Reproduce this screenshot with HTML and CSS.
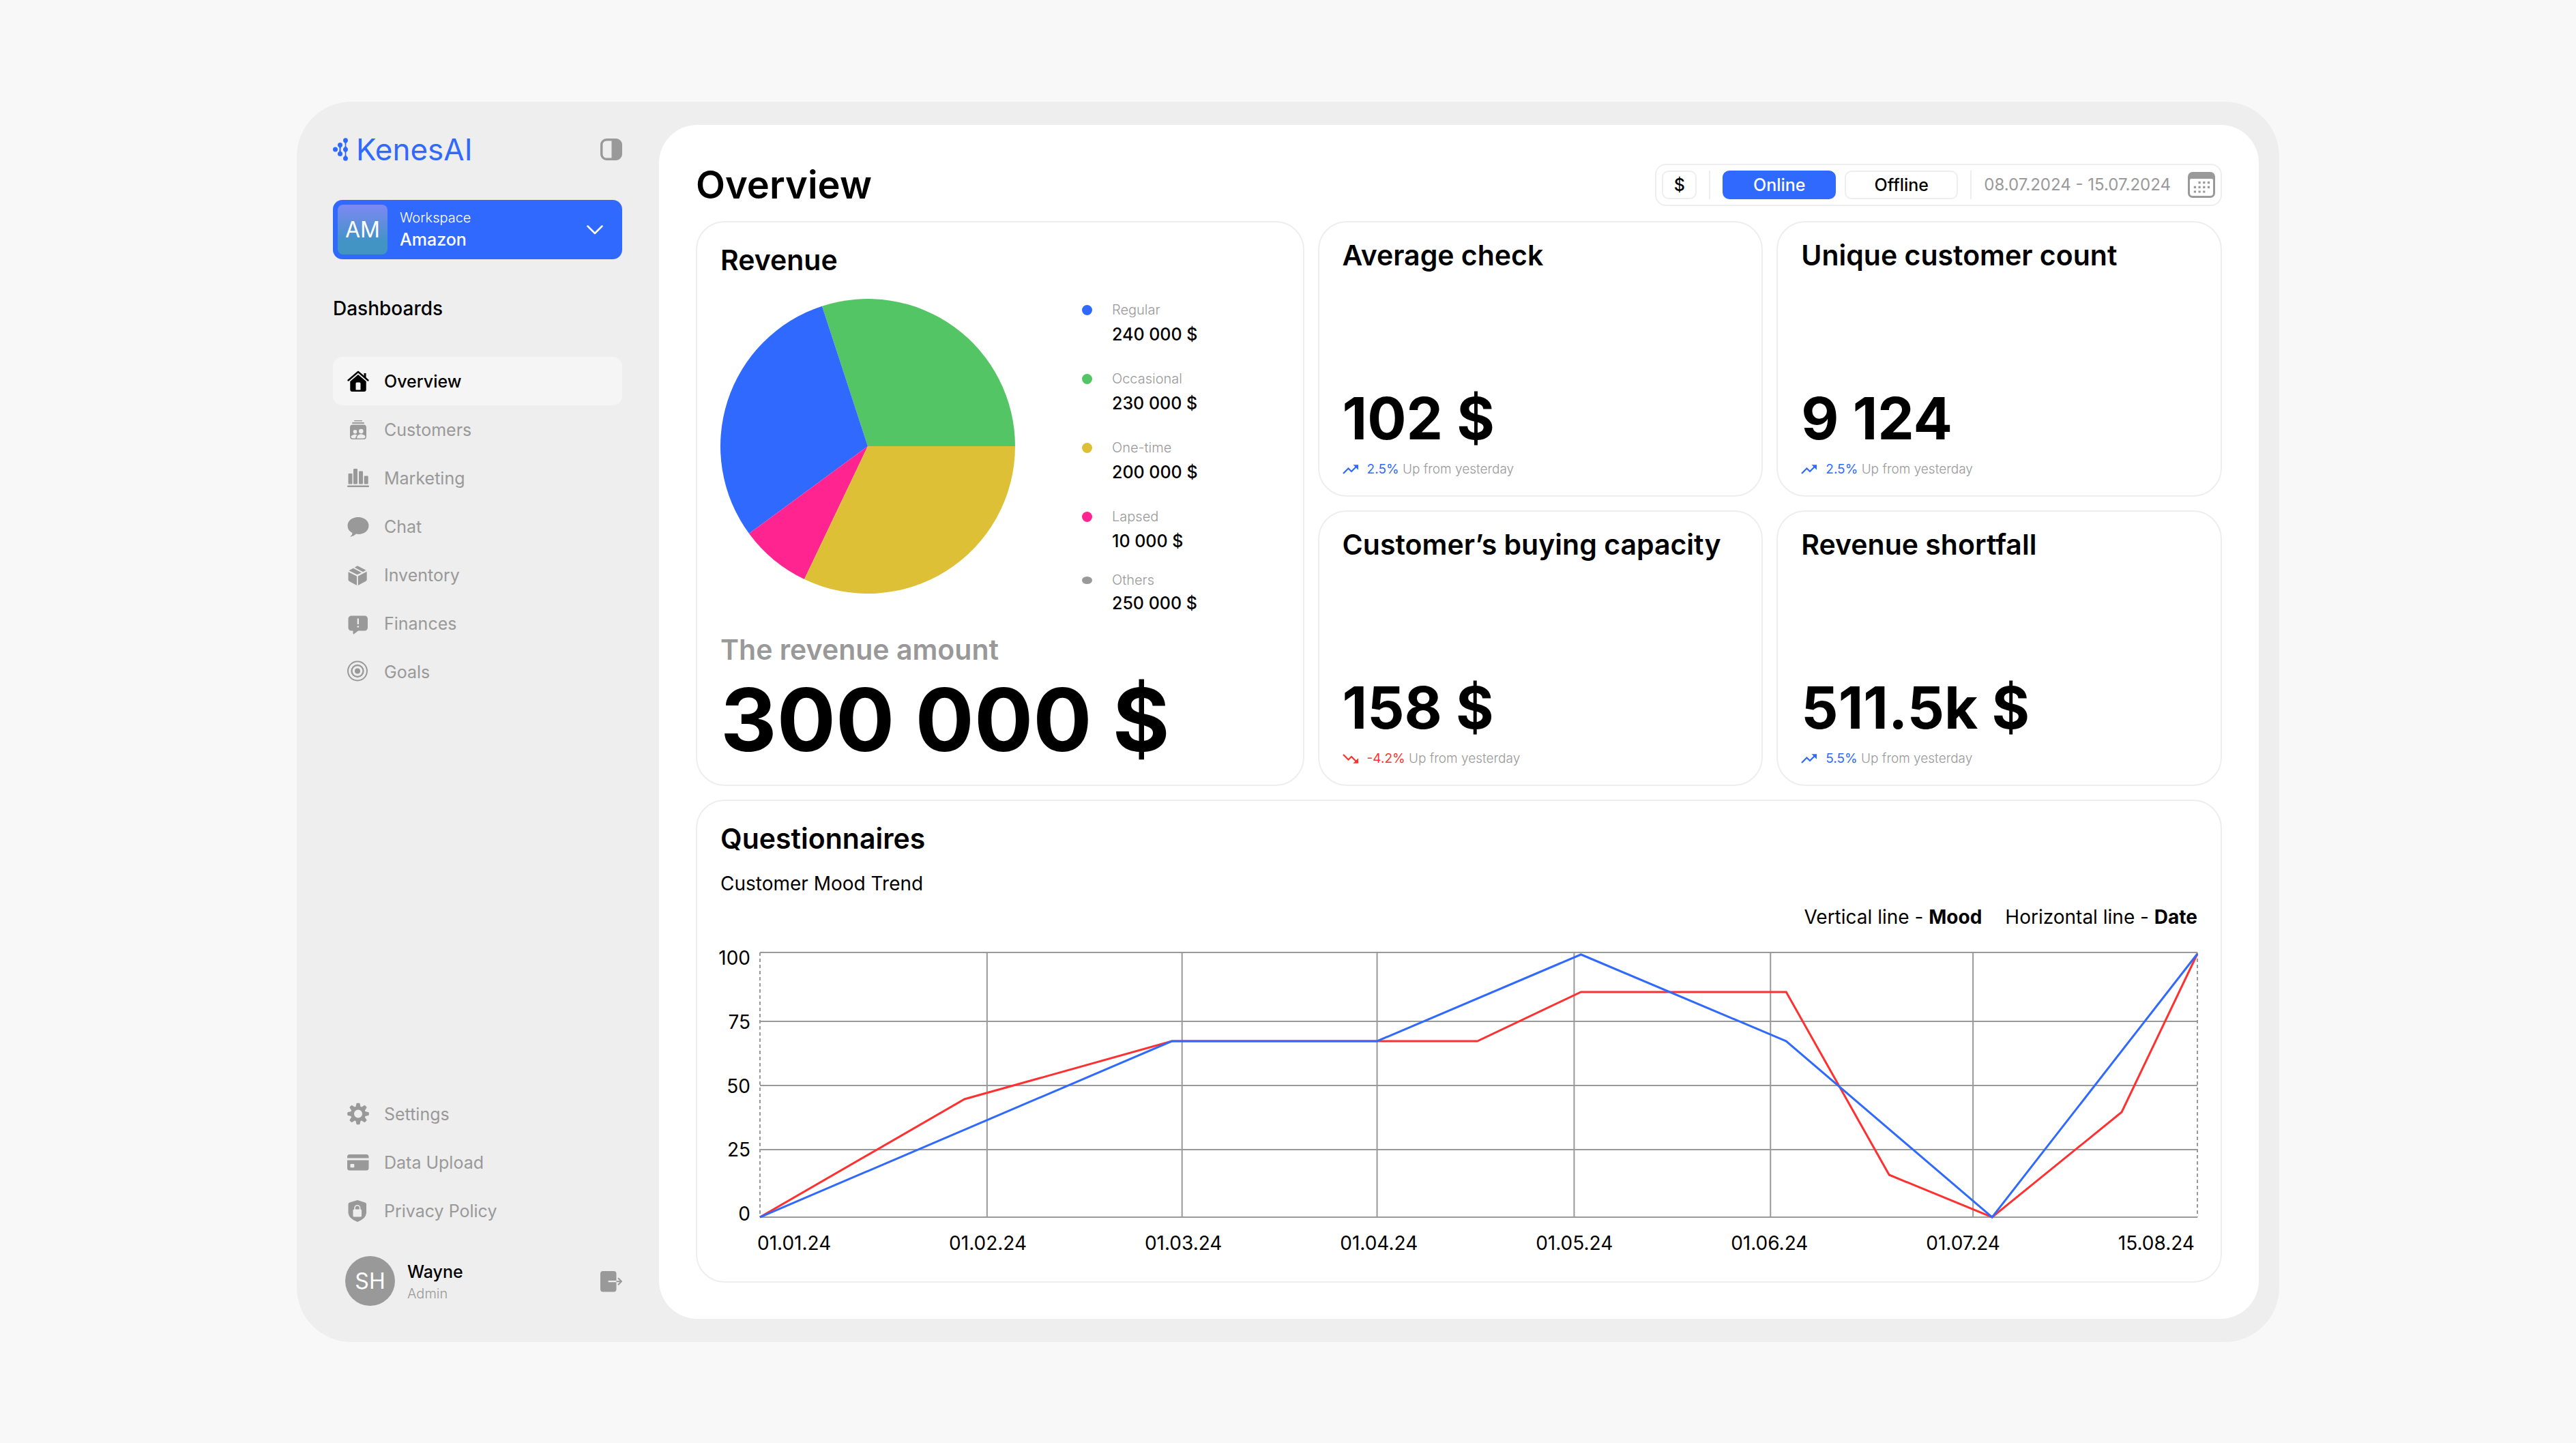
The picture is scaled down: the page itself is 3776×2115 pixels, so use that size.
FILE: index.html
```html
<!DOCTYPE html>
<html lang="en">
<head>
<meta charset="UTF-8">
<meta name="viewport" content="width=device-width, initial-scale=1.0">
<title>KenesAI - Overview</title>
<link rel="stylesheet" href="styles.css">
</head>
<body>

<!-- trend arrows reused by the stat cards -->
<svg class="sprite" aria-hidden="true">
    <symbol id="trend-up" viewBox="0 0 24 14">
        <path d="M1 13 L8.5 5.5 L13 10 L20 3" fill="none" stroke="currentColor" stroke-width="2.2"/>
        <path d="M15.5 .3H23V7.8Z" fill="currentColor"/>
    </symbol>
    <symbol id="trend-down" viewBox="0 0 24 14">
        <path d="M1 1 L8.5 8.5 L13 4 L20 11" fill="none" stroke="currentColor" stroke-width="2.2"/>
        <path d="M15.5 13.7H23V6.2Z" fill="currentColor"/>
    </symbol>
</svg>

<div class="app">
    <aside class="sidebar">
        <div class="brand-row">
            <a class="brand" href="#">
                <svg class="brand-mark" viewBox="0 0 22 34" aria-hidden="true">
                    <g fill="currentColor">
                        <circle cx="3.5" cy="17" r="3.5"/>
                        <circle cx="10.5" cy="10.5" r="3.5"/>
                        <circle cx="10.5" cy="23.5" r="3.5"/>
                        <circle cx="18.5" cy="3.8" r="3.5"/>
                        <circle cx="18.5" cy="17" r="3.5"/>
                        <circle cx="18.5" cy="30.2" r="3.5"/>
                        <path d="M8.5 12 Q10.5 17 8.5 22 H12.5 Q10.5 17 12.5 12Z M16.5 5.5 Q19 10.5 16.5 15.5 H20.5 Q18 10.5 20.5 5.5Z M16.5 18.5 Q19 23.5 16.5 28.5 H20.5 Q18 23.5 20.5 18.5Z"/>
                    </g>
                </svg>
                KenesAI
            </a>
            <button class="icon-btn" type="button" aria-label="Collapse sidebar">
                <svg width="32" height="32" viewBox="0 0 32 32">
                    <path d="M9 0H23A9 9 0 0 1 32 9V23A9 9 0 0 1 23 32H9A9 9 0 0 1 0 23V9A9 9 0 0 1 9 0ZM9 3.5A5.5 5.5 0 0 0 3.5 9V23A5.5 5.5 0 0 0 9 28.5H16.5V3.5Z" fill="currentColor" fill-rule="evenodd"/>
                </svg>
            </button>
        </div>

        <button class="workspace" type="button" aria-haspopup="listbox">
            <span class="workspace-tile">AM</span>
            <span class="workspace-text">
                <span class="workspace-label">Workspace</span>
                <span class="workspace-name">Amazon</span>
            </span>
            <svg width="24" height="14" viewBox="0 0 24 14" aria-hidden="true">
                <path d="M1.5 1.5 L12 12 L22.5 1.5" fill="none" stroke="currentColor" stroke-width="2.5" stroke-linecap="round" stroke-linejoin="round"/>
            </svg>
        </button>

        <h2 class="nav-title">Dashboards</h2>

        <nav class="nav">
            <a class="nav-item active" href="#">
                <svg viewBox="0 0 32 32">
                    <path d="M1.5 14.5 L16 2 L30.5 14.5" fill="none" stroke="currentColor" stroke-width="2.4" stroke-linecap="round" stroke-linejoin="round"/>
                    <path d="M24.5 4H27.5V11L24.5 8.5Z" fill="currentColor"/>
                    <path d="M16 6 L27.7 16V28A3 3 0 0 1 24.7 31H7.3A3 3 0 0 1 4.3 28V16ZM14 17.5A1.5 1.5 0 0 0 12.5 19V28.5H19.5V19A1.5 1.5 0 0 0 18 17.5Z" fill="currentColor" fill-rule="evenodd"/>
                </svg>
                Overview
            </a>
            <a class="nav-item" href="#">
                <svg viewBox="0 0 32 32">
                    <g fill="currentColor">
                        <rect x="10" y="2" width="12" height="1.5" rx=".7"/>
                        <rect x="7" y="5" width="18" height="2" rx="1"/>
                        <path d="M8 8.5H24A4 4 0 0 1 28 12.500V26A4 4 0 0 1 24 30H8A4 4 0 0 1 4 26V12.5A4 4 0 0 1 8 8.5ZM11.5 16A2.8 2.8 0 1 0 11.5 21.6A2.8 2.8 0 1 0 11.5 16ZM20.3 14.8A3.3 3.3 0 1 0 20.3 21.4A3.3 3.3 0 1 0 20.3 14.8ZM5.5 25.5V26A2.7 2.7 0 0 0 8 28.5H12Q12.5 25.5 14.5 23.5Q9 21.5 5.5 25.5ZM14 28.5H24A2.7 2.7 0 0 0 26.5 26V25Q23.5 22.3 20.3 22.3Q14.5 22.5 14 28.5Z" fill-rule="evenodd"/>
                    </g>
                </svg>
                Customers
            </a>
            <a class="nav-item" href="#">
                <svg viewBox="0 0 32 32">
                    <g fill="currentColor">
                        <rect x="1.5" y="9" width="6" height="15.5" rx="1"/>
                        <rect x="9" y="2" width="6" height="22.5" rx="1"/>
                        <rect x="17" y="5.5" width="6" height="19" rx="1"/>
                        <rect x="24.7" y="12.5" width="6" height="12" rx="1"/>
                        <rect x="0" y="26.5" width="32" height="2.5" rx="1"/>
                    </g>
                </svg>
                Marketing
            </a>
            <a class="nav-item" href="#">
                <svg viewBox="0 0 32 32">
                    <path d="M16 2C25 2 31.5 7.5 31.5 14.5S25 27 16.5 27Q14.5 27 13 26.6Q9.5 30.3 5 30.8Q4.3 30.5 5 29.8Q7.5 27.8 7.5 25.2Q.5 21.5 .5 14.5C.5 7.5 7 2 16 2Z" fill="currentColor"/>
                </svg>
                Chat
            </a>
            <a class="nav-item" href="#">
                <svg viewBox="0 0 32 32">
                    <g fill="currentColor">
                        <path d="M14 2.8Q15 2.2 16 2.8L27.5 8.8L23 11.2L10.8 4.8Z"/>
                        <path d="M8.8 5.8L20.8 12.3L17.5 14L14.5 15.2L2.5 9.3Z"/>
                        <path d="M1.5 11.2L14 17.5V31L3 25Q1.5 24 1.5 22.5Z"/>
                        <path d="M28.7 10.8L15.8 17.5V31L27 25Q28.7 24 28.7 22.5Z"/>
                    </g>
                </svg>
                Inventory
            </a>
            <a class="nav-item" href="#">
                <svg viewBox="0 0 32 32">
                    <path d="M6 4.5H25.5A4.5 4.5 0 0 1 30 9V22A4.5 4.5 0 0 1 25.5 26.5H16L10 31.3Q8.5 32 8.5 30.5V26.5H6A4.5 4.5 0 0 1 1.5 22V9A4.5 4.5 0 0 1 6 4.5ZM14.7 9.5V17H17V9.5A1.15 1.15 0 0 0 14.7 9.5ZM14.5 20.5A1.35 1.35 0 1 0 17.2 20.5A1.35 1.35 0 1 0 14.5 20.5Z" fill="currentColor" fill-rule="evenodd"/>
                </svg>
                Finances
            </a>
            <a class="nav-item" href="#">
                <svg viewBox="0 0 32 32">
                    <circle cx="15" cy="14.5" r="14" fill="none" stroke="currentColor" stroke-width="2"/>
                    <circle cx="15" cy="14.5" r="8.5" fill="none" stroke="currentColor" stroke-width="2.4"/>
                    <circle cx="15" cy="14.5" r="4" fill="currentColor"/>
                </svg>
                Goals
            </a>
        </nav>

        <nav class="nav nav-bottom">
            <a class="nav-item" href="#">
                <svg viewBox="0 0 32 32">
                    <g fill="currentColor">
                        <path d="M16 4.5A11 11 0 1 0 16 26.5A11 11 0 1 0 16 4.5ZM16 9.5A6 6 0 1 1 16 21.5A6 6 0 1 1 16 9.5Z" fill-rule="evenodd"/>
                        <g id="teeth">
                            <path id="tooth" d="M12.2 6.5L13.4 .7Q13.7 -.3 14.7 -.3H17.3Q18.3 -.3 18.6 .7L19.8 6.5Z"/>
                            <use href="#tooth" transform="rotate(90 16 15.5)"/>
                            <use href="#tooth" transform="rotate(180 16 15.5)"/>
                            <use href="#tooth" transform="rotate(270 16 15.5)"/>
                        </g>
                        <use href="#teeth" transform="rotate(45 16 15.5)"/>
                    </g>
                </svg>
                Settings
            </a>
            <a class="nav-item" href="#">
                <svg viewBox="0 0 32 32">
                    <path d="M3.5 4H28A3.5 3.5 0 0 1 31.5 7.5V9.5H0V7.5A3.5 3.5 0 0 1 3.5 4ZM0 12.5H31.5V24A3.5 3.5 0 0 1 28 27.5H3.5A3.5 3.5 0 0 1 0 24ZM5.5 18A1 1 0 0 0 4.5 19V22.2A1 1 0 0 0 5.5 23.2H9.3A1 1 0 0 0 10.3 22.2V19A1 1 0 0 0 9.3 18Z" fill="currentColor" fill-rule="evenodd"/>
                </svg>
                Data Upload
            </a>
            <a class="nav-item" href="#">
                <svg viewBox="0 0 32 32">
                    <path d="M15 0L26 3.5Q28 4.3 28 6V18Q28 27 15 32Q1.5 27 1.5 18V6Q1.5 4.3 3.5 3.5Z" fill="currentColor"/>
                    <rect x="8.5" y="13.5" width="12.5" height="11" rx="1.5" fill="#eee"/>
                    <path d="M11 14V11.5A3.8 3.8 0 0 1 18.6 11.5V14" fill="none" stroke="#eee" stroke-width="1.6"/>
                </svg>
                Privacy Policy
            </a>
        </nav>

        <div class="user">
            <span class="avatar">SH</span>
            <div class="user-text">
                <span class="user-name">Wayne</span>
                <span class="user-role">Admin</span>
            </div>
            <button class="icon-btn" type="button" aria-label="Log out">
                <svg width="32" height="32" viewBox="0 0 32 32">
                    <rect x="0" y="1" width="23.5" height="30.5" rx="4" fill="currentColor"/>
                    <path d="M12.5 16.2H23.5" stroke="#eee" stroke-width="2.2" stroke-linecap="round"/>
                    <path d="M23.5 16.2H30.5M26 11.2L31 16.2L26 21.2" fill="none" stroke="currentColor" stroke-width="2"/>
                </svg>
            </button>
        </div>
    </aside>

    <main class="main">
        <header class="topbar">
            <h1>Overview</h1>
            <div class="filters">
                <button class="chip chip-currency" type="button">$</button>
                <span class="divider"></span>
                <div class="switch">
                    <button class="chip chip-wide selected" type="button">Online</button>
                    <button class="chip chip-wide" type="button">Offline</button>
                </div>
                <span class="divider"></span>
                <button class="date-range" type="button">
                    08.07.2024 - 15.07.2024
                    <svg width="40" height="38" viewBox="0 0 40 38" aria-hidden="true">
                        <path d="M7 0H33A7 7 0 0 1 40 7V31A7 7 0 0 1 33 38H7A7 7 0 0 1 0 31V7A7 7 0 0 1 7 0ZM5 10A2 2 0 0 0 3 12V31A4 4 0 0 0 7 35H33A4 4 0 0 0 37 31V12A2 2 0 0 0 35 10Z" fill="currentColor" fill-rule="evenodd"/>
                        <path d="M15.500 15.700H32.500M8.800 22.300H32.500M8.800 29H26" fill="none" stroke="currentColor" stroke-width="3.2" stroke-dasharray="3.2 3.500"/>
                    </svg>
                </button>
            </div>
        </header>

        <div class="cards">
            <section class="card revenue">
                <h2>Revenue</h2>
                <div class="revenue-body">
                    <svg class="pie" viewBox="-216 -216 432 432" role="img" aria-label="Revenue by customer type">
                        <path d="M0 0L216 0A216 216 0 0 0 -67 -205.3Z" fill="#54c564"/>
                        <path d="M0 0L-67 -205.3A216 216 0 0 0 -174 128Z" fill="#3069fe"/>
                        <path d="M0 0L-174 128A216 216 0 0 0 -93 195Z" fill="#ff2490"/>
                        <path d="M0 0L-93 195A216 216 0 0 0 216 0Z" fill="#dec037"/>
                    </svg>
                    <ul class="legend">
                        <li><i class="dot blue"></i><span>Regular</span><b>240 000 $</b></li>
                        <li><i class="dot green"></i><span>Occasional</span><b>230 000 $</b></li>
                        <li><i class="dot yellow"></i><span>One-time</span><b>200 000 $</b></li>
                        <li><i class="dot pink"></i><span>Lapsed</span><b>10 000 $</b></li>
                        <li class="others"><i class="dot gray"></i><span>Others</span><b>250 000 $</b></li>
                    </ul>
                </div>
                <h3>The revenue amount</h3>
                <p class="total">300 000 $</p>
            </section>

            <section class="card stat">
                <h2>Average check</h2>
                <p class="value">102 $</p>
                <p class="trend"><svg class="up"><use href="#trend-up"/></svg><span><em class="up">2.5%</em> Up from yesterday</span></p>
            </section>
            <section class="card stat">
                <h2>Unique customer count</h2>
                <p class="value">9 124</p>
                <p class="trend"><svg class="up"><use href="#trend-up"/></svg><span><em class="up">2.5%</em> Up from yesterday</span></p>
            </section>
            <section class="card stat">
                <h2>Customer’s buying capacity</h2>
                <p class="value">158 $</p>
                <p class="trend"><svg class="down"><use href="#trend-down"/></svg><span><em class="down">-4.2%</em> Up from yesterday</span></p>
            </section>
            <section class="card stat">
                <h2>Revenue shortfall</h2>
                <p class="value">511.5k $</p>
                <p class="trend"><svg class="up"><use href="#trend-up"/></svg><span><em class="up">5.5%</em> Up from yesterday</span></p>
            </section>

            <section class="card questionnaires">
                <h2>Questionnaires</h2>
                <p class="subtitle">Customer Mood Trend</p>
                <p class="axes-note"><span>Vertical line - <b>Mood</b></span><span>Horizontal line - <b>Date</b></span></p>
                <div class="chart">
                    <div class="y-axis"><span>100</span><span>75</span><span>50</span><span>25</span><span>0</span></div>
                    <div class="plot">
                        <svg viewBox="0 0 2108 388" preserveAspectRatio="none" role="img" aria-label="Customer mood by date">
                            <path class="grid-line" d="M0 0H2108M0 101H2108M0 195H2108M0 289H2108M0 388H2108M333 0V388M619 0V388M905 0V388M1194 0V388M1482 0V388M1779 0V388"/>
                            <path class="grid-line dashed" d="M0 0V388M2108 0V388"/>
                            <polyline class="line red" points="0,388 300,215 604,130 1052,130 1204,58 1505,58 1656,326 1807,388 1997,234 2108,2"/>
                            <polyline class="line blue" points="0,388 604,130 905,130 1204,3 1505,130 1807,388 2108,2"/>
                        </svg>
                    </div>
                    <div class="x-axis"><span>01.01.24</span><span>01.02.24</span><span>01.03.24</span><span>01.04.24</span><span>01.05.24</span><span>01.06.24</span><span>01.07.24</span><span>15.08.24</span></div>
                </div>
            </section>
        </div>
    </main>
</div>

</body>
</html>
```
FILE: styles.css
```css
* {
    box-sizing: border-box;
}

body {
    margin: 0;
    padding: 149px 435px 148px;
    background-color: #f8f8f8;
    color: #000;
    font-family: Inter, "Liberation Sans", sans-serif;
    font-size: 28px;
    line-height: 36px;
}

h1, h2, h3, p, ul {
    margin: 0;
    padding: 0;
}

button {
    border: none;
    padding: 0;
    background: none;
    color: inherit;
    font: inherit;
    cursor: pointer;
}

a {
    color: inherit;
    text-decoration: none;
}

svg {
    display: block;
    flex: none;
}

.sprite {
    display: none;
}

.app {
    display: flex;
    padding: 34px 30px 34px 0;
    background-color: #eee;
    border-radius: 80px;
}

/* sidebar */
.sidebar {
    display: flex;
    flex-direction: column;
    flex: none;
    width: 531px;
    padding: 12px 54px 19px 53px;
}

.brand-row {
    display: flex;
    align-items: center;
    justify-content: space-between;
    margin-bottom: 50px;
}

.brand {
    display: flex;
    align-items: center;
    gap: 12px;
    color: #3069fe;
    font-size: 44px;
    line-height: 48px;
}

.brand-mark {
    width: 22px;
    height: 34px;
}

.icon-btn {
    color: #999;
}

.workspace {
    display: flex;
    align-items: center;
    height: 87px;
    padding: 0 28px 0 7px;
    border-radius: 14px;
    background-color: #3069fe;
    color: #fff;
    text-align: left;
}

.workspace-tile {
    width: 73px;
    border-radius: 8px;
    background: linear-gradient(#7e88f4, #4194c4 75%);
    font-size: 32px;
    line-height: 73px;
    text-align: center;
}

.workspace-text {
    display: flex;
    flex-direction: column;
    gap: 4px;
    flex: 1;
    margin-left: 18px;
}

.workspace-label {
    font-size: 20px;
    font-weight: 300;
    line-height: 24px;
}

.workspace-name {
    font-size: 25px;
    font-weight: 500;
    line-height: 32px;
}

.nav-title {
    margin: 54px 0 53px;
    font-size: 28px;
    font-weight: 500;
}

.nav-item {
    display: flex;
    align-items: center;
    gap: 22px;
    height: 71px;
    padding: 0 21px;
    border-radius: 14px;
    color: #999;
    font-size: 25px;
}

.nav-item svg {
    width: 32px;
    height: 32px;
    overflow: visible;
}

.nav-item.active {
    background-color: #f5f5f5;
    color: #000;
    font-weight: 500;
}

.nav-bottom {
    margin-top: auto;
}

.user {
    display: flex;
    align-items: center;
    margin-top: 31px;
    padding-left: 18px;
}

.avatar {
    width: 73px;
    border-radius: 50%;
    background-color: #999;
    color: #fff;
    font-size: 32px;
    line-height: 73px;
    text-align: center;
}

.user-text {
    display: flex;
    flex-direction: column;
    gap: 4px;
    flex: 1;
    margin-left: 18px;
}

.user-name {
    font-size: 25px;
    font-weight: 500;
    line-height: 32px;
}

.user-role {
    color: #999;
    font-size: 20px;
    font-weight: 300;
    line-height: 24px;
}

/* main panel */
.main {
    flex: 1;
    min-width: 0;
    padding: 57px 54px 53px;
    border-radius: 56px;
    background-color: #fff;
}

.topbar {
    display: flex;
    align-items: center;
    justify-content: space-between;
    margin-bottom: 22px;
}

h1 {
    font-size: 56px;
    font-weight: 600;
    line-height: 62px;
}

.filters {
    display: flex;
    align-items: center;
    gap: 18px;
    height: 62px;
    padding: 0 8px;
    border: 2px solid #eee;
    border-radius: 16px;
}

.chip {
    height: 42px;
    border: 2px solid #eee;
    border-radius: 10px;
    font-size: 25px;
    font-weight: 500;
    line-height: 38px;
}

.chip-currency {
    width: 51px;
}

.chip-wide {
    width: 166px;
}

.chip.selected {
    border-color: #3069fe;
    background-color: #3069fe;
    color: #fff;
}

.switch {
    display: flex;
    gap: 13px;
}

.divider {
    width: 2px;
    height: 42px;
    background-color: #eee;
}

.date-range {
    display: flex;
    align-items: center;
    gap: 25px;
    color: #999;
    font-size: 24px;
}

/* cards */
.cards {
    display: grid;
    grid-template-columns: 892fr 653fr 653fr;
    gap: 20px;
}

.card {
    padding: 30px 34px;
    border: 2px solid #eee;
    border-radius: 42px;
}

.card h2,
.card h3 {
    font-size: 41px;
    font-weight: 600;
    line-height: 50px;
}

.card h3 {
    margin-top: 57px;
    color: #999;
}

.revenue {
    grid-row: span 2;
}

.revenue-body {
    display: flex;
    gap: 98px;
    margin-top: 32px;
}

.pie {
    width: 432px;
    height: 432px;
}

.legend {
    display: flex;
    flex-direction: column;
    gap: 37px;
    height: 432px;
    padding-top: 4px;
    list-style: none;
}

.legend li {
    display: grid;
    grid-template-columns: 15px auto;
    gap: 8px 29px;
    align-items: center;
}

.legend span {
    color: #999;
    font-size: 20px;
    font-weight: 300;
    line-height: 24px;
}

.legend b {
    grid-column: 2;
    font-size: 25px;
    font-weight: 500;
    line-height: 32px;
}

.legend .others {
    row-gap: 6px;
    margin-top: -8px;
}

.dot {
    height: 15px;
    border-radius: 50%;
}

.dot.blue { background-color: #3069fe; }
.dot.green { background-color: #54c564; }
.dot.yellow { background-color: #dec037; }
.dot.pink { background-color: #ff2490; }
.dot.gray {
    height: 11px;
    background-color: #999;
}

.total {
    margin-top: 13px;
    font-size: 128px;
    font-weight: 700;
    line-height: 130px;
}

.stat {
    display: flex;
    flex-direction: column;
    padding: 23px 34px 26px;
}

.value {
    margin-top: auto;
    font-size: 85px;
    font-weight: 700;
    line-height: 88px;
}

.trend {
    display: flex;
    align-items: center;
    gap: 12px;
    margin-top: 18px;
    color: #999;
    font-size: 19px;
    font-weight: 300;
    line-height: 24px;
}

.trend svg {
    width: 24px;
    height: 14px;
}

.trend em {
    font-style: normal;
    font-weight: 400;
}

.up {
    color: #3069fe;
}

.down {
    color: #ff3030;
}

/* mood chart */
.questionnaires {
    grid-column: 1 / -1;
    padding-bottom: 38px;
}

.subtitle {
    margin-top: 23px;
}

.axes-note {
    display: flex;
    justify-content: flex-end;
    gap: 34px;
    margin-top: 13px;
}

.chart {
    display: grid;
    grid-template-columns: 44px 1fr;
    column-gap: 14px;
    margin-top: 24px;
}

.y-axis {
    display: flex;
    flex-direction: column;
    align-items: flex-end;
    justify-content: space-between;
}

.plot {
    padding: 10px 0 13px;
}

.plot svg {
    width: 100%;
    height: 388px;
    overflow: visible;
}

.grid-line,
.line {
    fill: none;
    vector-effect: non-scaling-stroke;
}

.grid-line {
    stroke: #999;
    stroke-width: 2;
}

.dashed {
    stroke-dasharray: 5 4;
}

.line {
    stroke-width: 3;
}

.line.red { stroke: #ff3030; }
.line.blue { stroke: #3069fe; }

.x-axis {
    grid-column: 1 / -1;
    display: flex;
    justify-content: space-between;
    margin-top: 7px;
    padding: 0 4px 0 54px;
}
```
